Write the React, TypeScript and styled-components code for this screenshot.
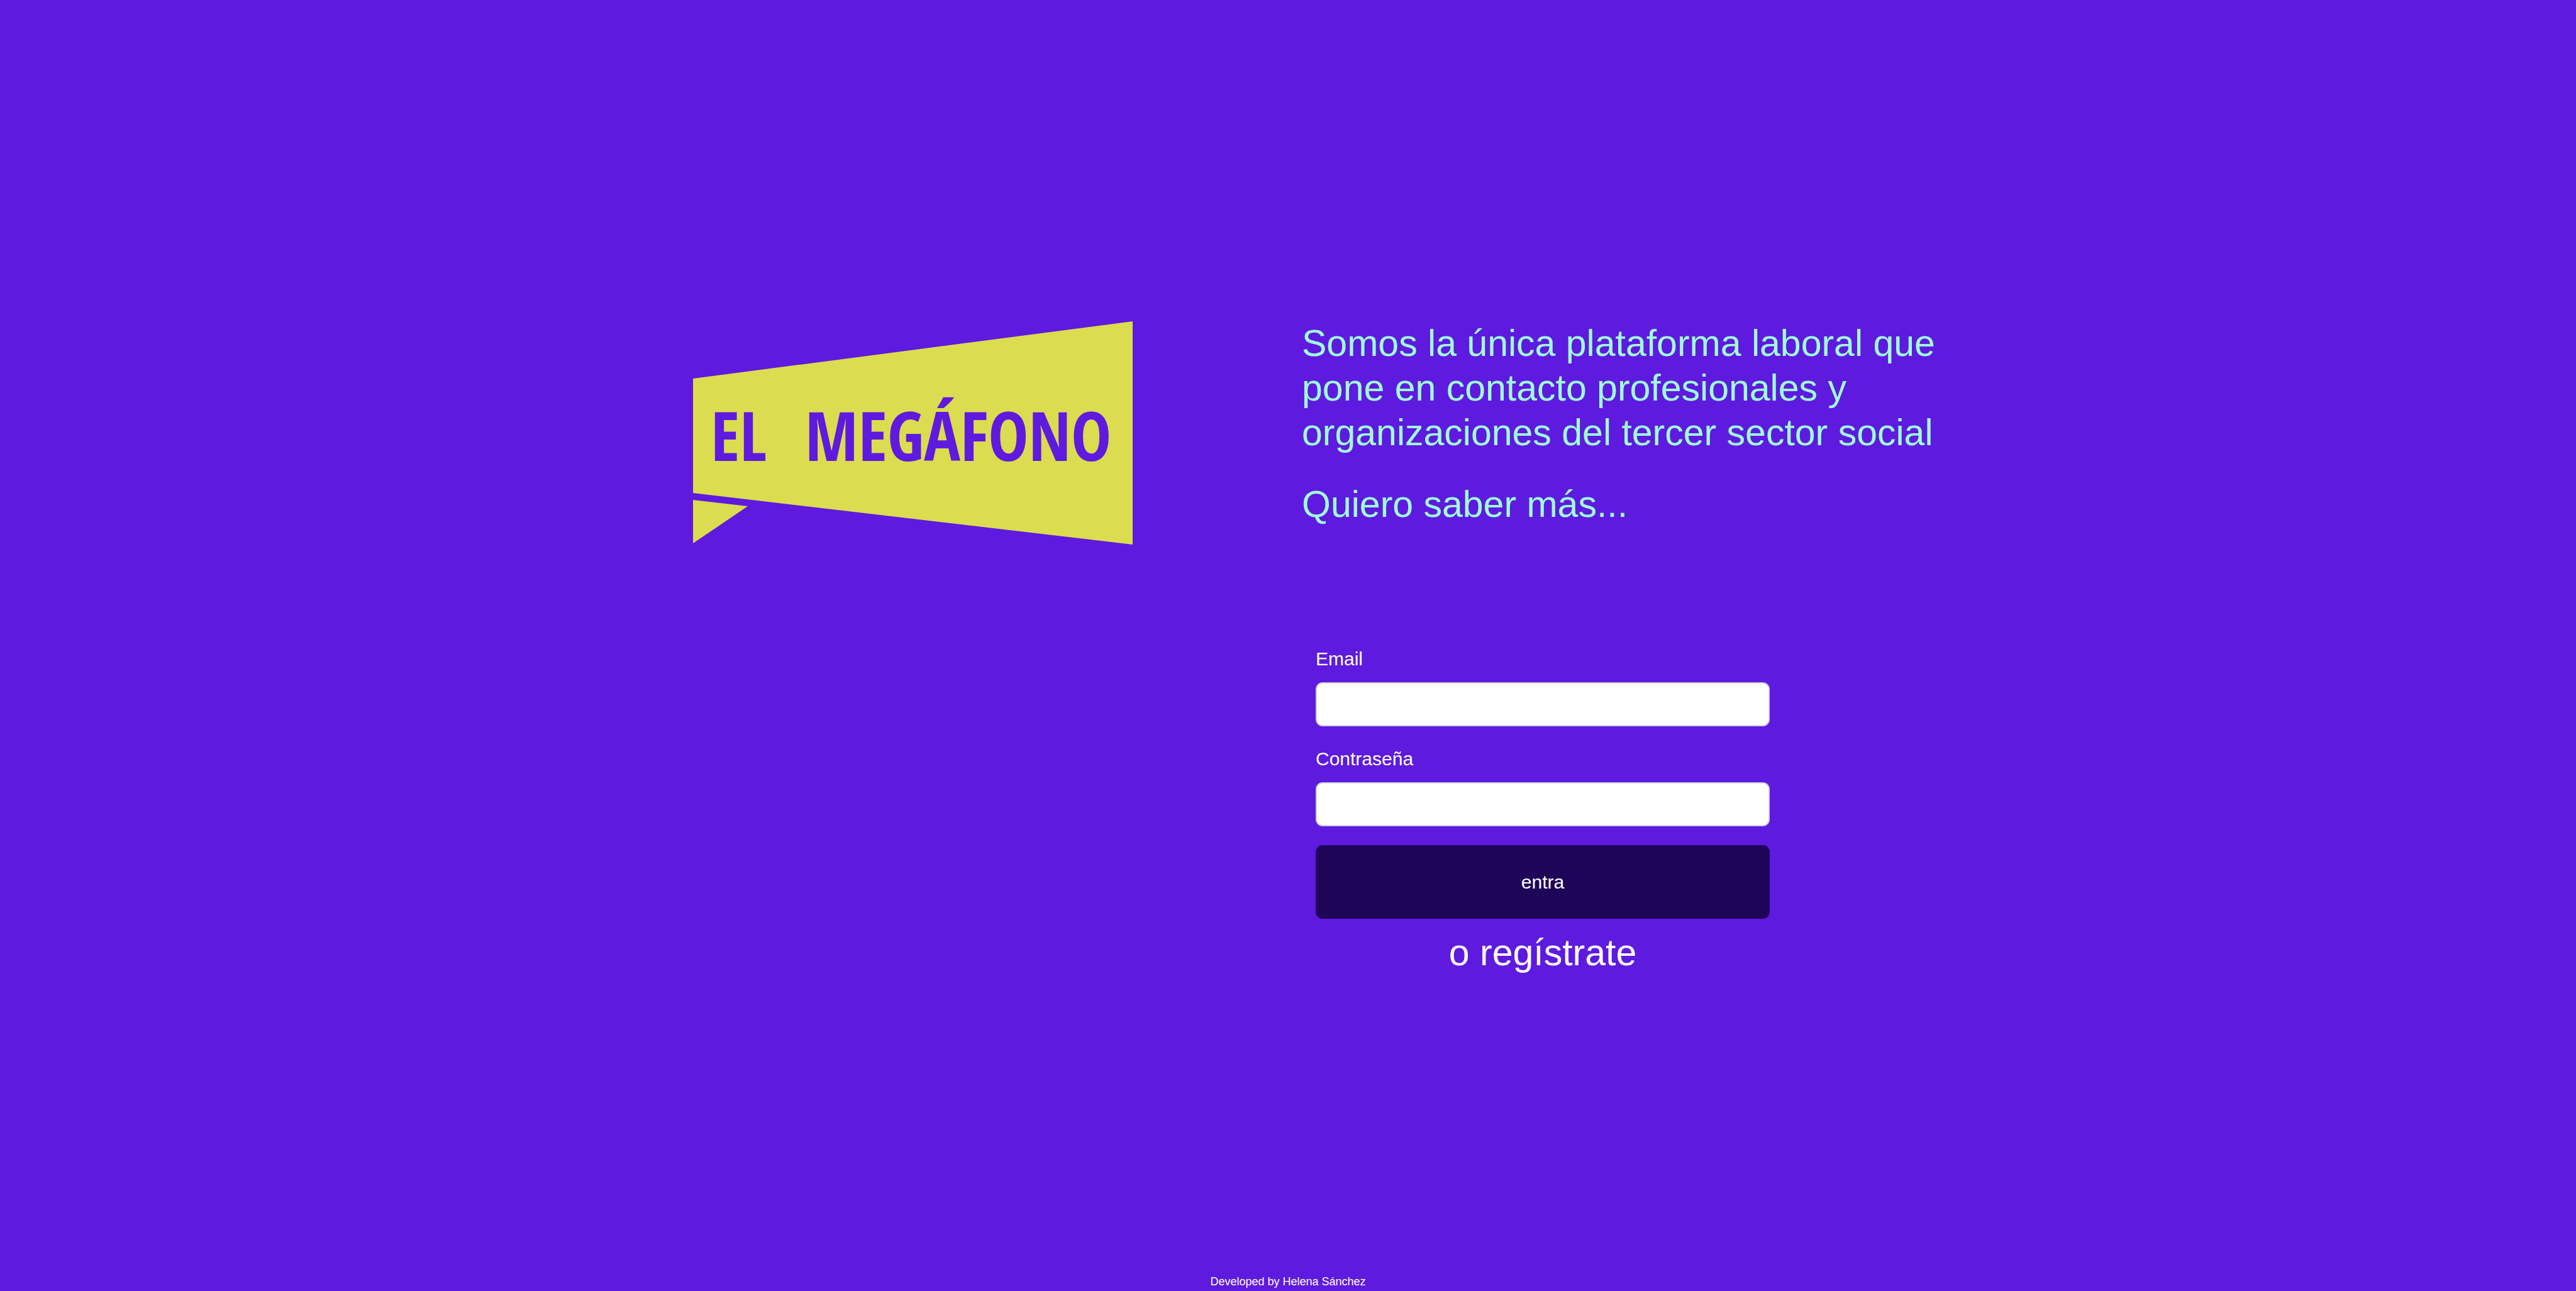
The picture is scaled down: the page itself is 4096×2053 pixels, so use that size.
import React from "react";
import styled, { createGlobalStyle } from "styled-components";

const GlobalStyle = createGlobalStyle`
  *, *::before, *::after {
    box-sizing: border-box;
  }

  body {
    margin: 0;
    background: #5e1ade;
    color: #ffffff;
    font-family: "Liberation Sans", Arial, Helvetica, sans-serif;
    font-size: 30px;
    line-height: 44px;
  }
`;

const Page = styled.div`
  display: flex;
  flex-direction: column;
  min-height: 100vh;
`;

const Main = styled.main`
  display: grid;
  grid-template-columns: 1fr 1fr;
  flex: 1;
  width: 100%;
  max-width: 2432px;
  margin: 0 auto;
  padding-top: 511px;
`;

const BrandColumn = styled.section`
  display: flex;
  justify-content: center;
  align-items: flex-start;
  padding-left: 22px;
`;

const Logo = styled.svg`
  display: block;
  width: 100%;
  max-width: 699px;
  height: auto;
`;

const LogoText = styled.text`
  fill: #5e1ade;
  font-family: "Open Sans Condensed", "Roboto Condensed", sans-serif;
  font-weight: 700;
  font-size: 108px;
`;

const AccessColumn = styled.section`
  display: flex;
  flex-direction: column;
  padding: 0 22px;
`;

const Intro = styled.div`
  display: flex;
  flex-direction: column;
  align-items: flex-start;
  gap: 43px;
  max-width: 1060px;
  color: #9ffeda;
  font-size: 59px;
  line-height: 71px;
`;

const Claim = styled.h1`
  margin: 0;
  font: inherit;
`;

const TextLink = styled.a`
  color: inherit;
  text-decoration: none;
`;

const LoginForm = styled.form`
  display: flex;
  flex-direction: column;
  gap: 30px;
  width: 100%;
  max-width: 766px;
  margin-top: 188px;
  padding: 0 22px;
`;

const Field = styled.div`
  display: flex;
  flex-direction: column;
  gap: 15px;
`;

const Input = styled.input`
  width: 100%;
  height: 70px;
  padding: 11px 22px;
  border: 2px solid #ced4da;
  border-radius: 11px;
  background: #ffffff;
  color: #212529;
  font: inherit;
`;

const SubmitButton = styled.button`
  height: 117px;
  border: 0;
  border-radius: 11px;
  background: #1e0558;
  color: #ffffff;
  font: inherit;
  cursor: pointer;
`;

const Register = styled.p`
  width: 100%;
  max-width: 766px;
  margin: 19px 0 0;
  font-size: 59px;
  line-height: 71px;
  text-align: center;
`;

const Footer = styled.footer`
  padding-bottom: 1px;
  font-size: 18px;
  line-height: 27px;
  text-align: center;
`;

function MegafonoLogo() {
  return (
    <Logo viewBox="0 0 699 355" role="img" aria-label="El Megáfono">
      <path fill="#dbdc50" d="M0 91 699 0V355L0 273Z" />
      <path fill="#dbdc50" d="M0 284 87 294 0 353Z" />
      <LogoText x="28" y="222">EL</LogoText>
      <LogoText x="178" y="222">MEGÁFONO</LogoText>
    </Logo>
  );
}

export default function App() {
  return (
    <Page>
      <GlobalStyle />
      <Main>
        <BrandColumn>
          <MegafonoLogo />
        </BrandColumn>
        <AccessColumn>
          <Intro>
            <Claim>
              Somos la única plataforma laboral que pone en contacto profesionales y
              organizaciones del tercer sector social
            </Claim>
            <TextLink href="#about">Quiero saber más...</TextLink>
          </Intro>
          <LoginForm onSubmit={(event) => event.preventDefault()}>
            <Field>
              <label htmlFor="email">Email</label>
              <Input id="email" type="email" autoComplete="email" />
            </Field>
            <Field>
              <label htmlFor="password">Contraseña</label>
              <Input id="password" type="password" autoComplete="current-password" />
            </Field>
            <SubmitButton type="submit">entra</SubmitButton>
          </LoginForm>
          <Register>
            <TextLink href="#register">o regístrate</TextLink>
          </Register>
        </AccessColumn>
      </Main>
      <Footer>Developed by Helena Sánchez</Footer>
    </Page>
  );
}
